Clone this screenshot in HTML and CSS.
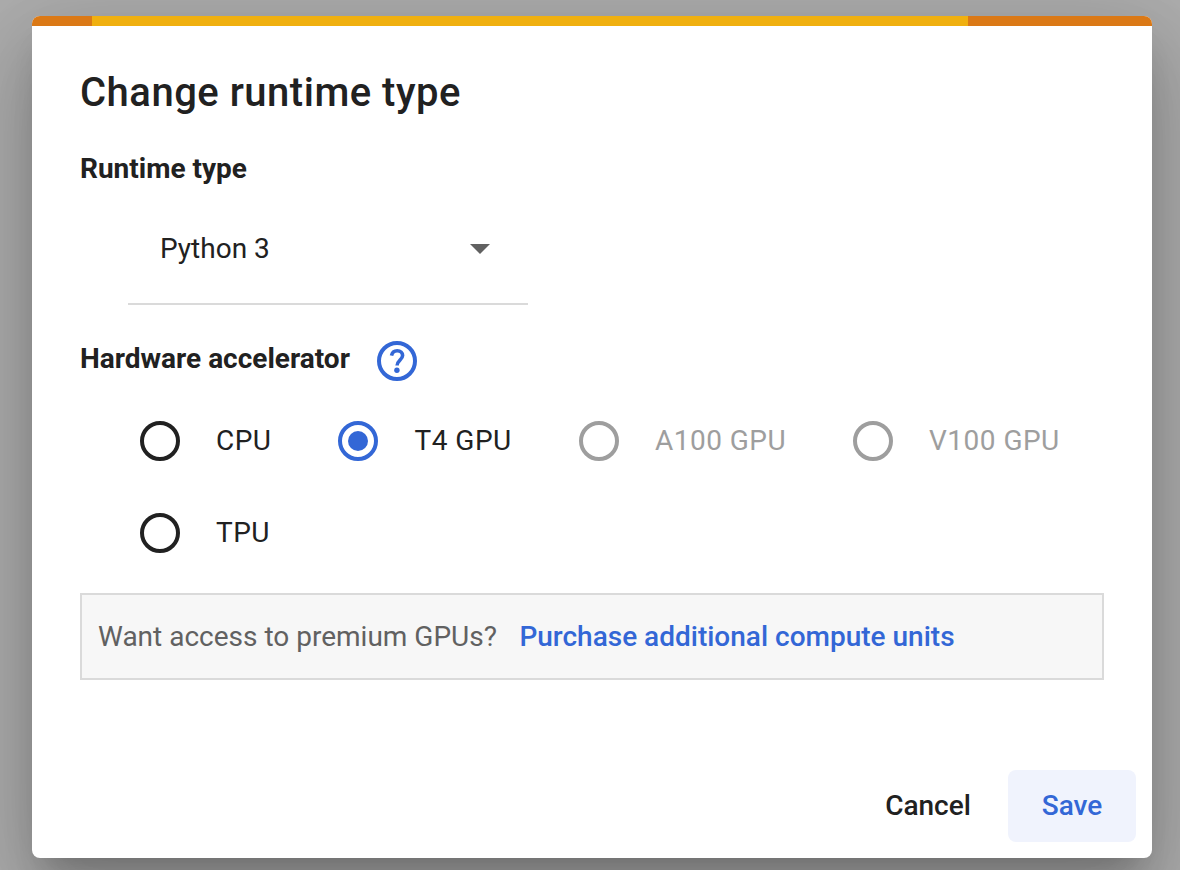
FILE: index.html
```html
<!DOCTYPE html>
<html lang="en">
<head>
<meta charset="utf-8">
<title>Change runtime type</title>
<link rel="stylesheet" href="styles.css">
</head>
<body>
<main class="dialog" role="dialog" aria-labelledby="title">
  <div class="progress"><span class="progress-bar"></span></div>
  <div class="content">
    <h1 class="title" id="title">Change runtime type</h1>
    <h2 class="heading">Runtime type</h2>
    <div class="select">
      <span class="select-value">Python 3</span>
      <svg class="select-arrow" viewBox="0 0 20 10"><path d="M0 0h20L10 10z"/></svg>
    </div>
    <div class="heading-row">
      <h2 class="heading">Hardware accelerator</h2>
      <svg class="help" viewBox="0 0 40 40"><circle cx="20" cy="20" r="18" stroke-width="4"/><path d="M14.500 14.600C15.200 11.500 17.100 9.800 20.200 9.800c3.200 0 5.400 1.900 5.400 4.800 0 4.100-5.500 5-5.500 10" stroke-width="3.600"/><circle class="help-dot" cx="19.900" cy="29.200" r="2.700"/></svg>
    </div>
    <div class="radios" role="radiogroup">
      <label class="radio"><span class="circle"></span><span>CPU</span></label>
      <label class="radio"><span class="circle checked"></span><span>T4 GPU</span></label>
      <label class="radio disabled"><span class="circle"></span><span>A100 GPU</span></label>
      <label class="radio disabled"><span class="circle"></span><span>V100 GPU</span></label>
      <label class="radio"><span class="circle"></span><span>TPU</span></label>
    </div>
    <div class="notice"><span>Want access to premium GPUs?</span><a class="notice-link">Purchase additional compute units</a></div>
  </div>
  <div class="actions">
    <button class="button cancel">Cancel</button>
    <button class="button save">Save</button>
  </div>
</main>
</body>
</html>
```
FILE: styles.css
```css
* { box-sizing: border-box; }
body {
  margin: 0;
  height: 870px;
  padding: 16px 28px 12px 32px;
  overflow: hidden;
  background: #adadad;
  color: #212121;
  font: 400 28px/40px Roboto, sans-serif;
}
.dialog {
  display: flex;
  flex-direction: column;
  height: 842px;
  overflow: hidden;
  border-radius: 8px;
  background: #fff;
  box-shadow: 0 22px 30px -14px rgba(0, 0, 0, .2), 0 48px 76px 6px rgba(0, 0, 0, .14), 0 18px 92px 16px rgba(0, 0, 0, .12);
}
.progress { flex: none; height: 10px; padding-left: 60px; background: #db7916; }
.progress-bar { display: block; width: 876px; height: 10px; background: #f0b010; }
.content { padding: 43px 48px 0; }
.title { margin: 0; font-size: 40px; font-weight: 500; line-height: 48px; letter-spacing: .5px; }
.heading { margin: 0; font-size: 28px; font-weight: 700; line-height: 40px; }
.title + .heading { margin-top: 32px; }
.select {
  display: flex;
  align-items: center;
  justify-content: space-between;
  width: 400px;
  height: 112px;
  margin: 4px 0 0 48px;
  padding: 2px 38px 0 32px;
  border-bottom: 2px solid #dadada;
}
.select-arrow { width: 20px; height: 10px; fill: #616161; }
.heading-row { display: flex; align-items: center; gap: 27px; height: 40px; margin-top: 36px; }
.heading-row .heading { padding-bottom: 4px; }
.help { width: 40px; height: 40px; fill: none; stroke: #3367d6; }
.help-dot { fill: #3367d6; stroke: none; }
.radios {
  display: grid;
  grid-template-columns: 198px 241px 274px 230px;
  grid-auto-rows: 80px;
  row-gap: 12px;
  margin: 20px 0 0 60px;
}
.radio { display: flex; align-items: center; gap: 36px; letter-spacing: .48px; white-space: nowrap; }
.circle {
  display: grid;
  place-items: center;
  flex: none;
  width: 40px;
  height: 40px;
  border: 4px solid #212121;
  border-radius: 50%;
}
.checked { border-color: #3367d6; }
.checked + span { margin-left: .5px; }
.checked::after { content: ""; width: 20px; height: 20px; border-radius: 50%; background: #3367d6; }
.disabled { color: #9e9e9e; }
.disabled .circle { border-color: #9e9e9e; }
.notice {
  display: flex;
  align-items: center;
  gap: 22.5px;
  height: 87px;
  margin-top: 20px;
  padding-left: 16px;
  border: 2px solid #dadada;
  background: #f7f7f7;
  color: #616161;
  white-space: nowrap;
}
.notice-link { color: #3367d6; font-weight: 500; }
.actions { display: flex; justify-content: flex-end; gap: 4px; margin-top: auto; padding: 0 16px 16px; }
.button {
  height: 72px;
  padding: 0;
  border: 0;
  border-radius: 8px;
  background: none;
  color: #212121;
  font: 500 28px/40px Roboto, sans-serif;
}
.cancel { width: 152px; }
.save { width: 128px; background: #f0f3fd; color: #3367d6; }
```
